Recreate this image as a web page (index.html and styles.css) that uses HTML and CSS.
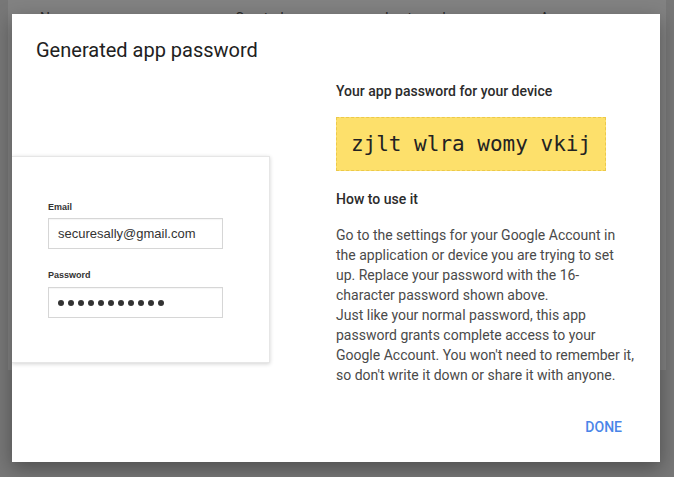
FILE: index.html
```html
<!DOCTYPE html>
<html>
<head>
<meta charset="utf-8">
<link rel="stylesheet" href="styles.css">
</head>
<body>
<div class="page">
  <div class="bg-card">
    <div class="bg-row">
      <span class="c1">Name</span>
      <span class="c2">Created</span>
      <span class="c3">Last used</span>
      <span class="c4">Access</span>
    </div>
  </div>
</div>
<div class="dialog">
  <h1 class="title">Generated app password</h1>
  <div class="content">
    <div class="left">
      <div class="demo-card">
        <div class="label">Email</div>
        <div class="field">securesally@gmail.com</div>
        <div class="label label-pw">Password</div>
        <div class="field dots">
          <span></span><span></span><span></span><span></span><span></span><span></span><span></span><span></span><span></span><span></span><span></span>
        </div>
      </div>
    </div>
    <div class="right">
      <div class="heading">Your app password for your device</div>
      <div class="pwbox">zjlt wlra womy vkij</div>
      <div class="heading how">How to use it</div>
      <p class="text">Go to the settings for your Google Account in the application or device you are trying to set up. Replace your password with the 16-character password shown above.<br>Just like your normal password, this app password grants complete access to your Google Account. You won't need to remember it, so don't write it down or share it with anyone.</p>
    </div>
  </div>
  <div class="actions">
    <button class="done">DONE</button>
  </div>
</div>
</body>
</html>
```
FILE: styles.css
```css
html, body {
  margin: 0;
  padding: 0;
}
body {
  background: #777777;
  width: 674px;
  height: 477px;
  overflow: hidden;
  font-family: Roboto, "Liberation Sans", Arial, sans-serif;
}
.page {
  padding: 0 8px;
}
.bg-card {
  background: #828282;
  height: 370px;
}
.bg-row {
  position: relative;
  height: 40px;
  font-family: Roboto, sans-serif;
  font-size: 14px;
  color: #2a2a2a;
}
.bg-row span {
  position: absolute;
  top: 10px;
}
.c1 { left: 32px; }
.c2 { left: 227px; }
.c3 { left: 377px; }
.c4 { left: 532px; }

.dialog {
  position: absolute;
  left: 12px;
  top: 14px;
  width: 648px;
  height: 448px;
  background: #ffffff;
  box-shadow: 0 6px 18px rgba(0, 0, 0, 0.35);
  display: flex;
  flex-direction: column;
  overflow: hidden;
}
.title {
  margin: 0;
  padding: 24px 24px 0 24px;
  font-size: 20px;
  line-height: 24px;
  font-weight: 400;
  color: #212121;
}
.content {
  display: flex;
}
.left {
  width: 324px;
  padding-top: 94px;
}
.demo-card {
  width: 258px;
  height: 207px;
  box-sizing: border-box;
  padding: 45px 0 0 36px;
  background: #fff;
  border: 1px solid #e6e6e6;
  border-left: none;
  box-shadow: 0 1px 4px rgba(0, 0, 0, 0.18);
  font-family: "Liberation Sans", Arial, sans-serif;
}
.label {
  font-size: 9px;
  line-height: 12px;
  font-weight: bold;
  color: #333;
  margin-bottom: 5px;
  margin-top: -1px;
}
.label-pw {
  margin-top: 20px;
  margin-bottom: 6px;
}
.field {
  width: 175px;
  height: 31px;
  box-sizing: border-box;
  border: 1px solid #d6d6d6;
  box-shadow: inset 0 1px 1px rgba(0,0,0,0.04);
  padding: 0 9px;
  font-size: 13px;
  line-height: 29px;
  color: #333;
}
.dots {
  display: flex;
  align-items: center;
  gap: 4px;
}
.dots span {
  width: 6px;
  height: 6px;
  border-radius: 50%;
  background: #333;
}
.right {
  width: 300px;
  padding-top: 19px;
}
.heading {
  font-size: 14px;
  line-height: 20px;
  font-weight: 500;
  color: #2b2b2b;
}
.pwbox {
  margin-top: 16px;
  width: 270px;
  height: 54px;
  box-sizing: border-box;
  background: #fde06b;
  border: 1px dashed #ecc94a;
  font-family: "DejaVu Sans Mono", monospace;
  font-size: 21px;
  line-height: 52px;
  text-align: center;
  color: #222;
}
.how {
  margin-top: 18px;
}
.text {
  margin: 16px 0 0 0;
  font-size: 14px;
  line-height: 20px;
  color: #4a4a4a;
}
.actions {
  margin-top: auto;
  display: flex;
  justify-content: flex-end;
  padding: 0 30px 17px 0;
}
.done {
  height: 36px;
  padding: 0 8px;
  border: none;
  background: transparent;
  font-family: Roboto, sans-serif;
  font-size: 14px;
  font-weight: 500;
  color: #4a85e8;
  cursor: pointer;
}
```
